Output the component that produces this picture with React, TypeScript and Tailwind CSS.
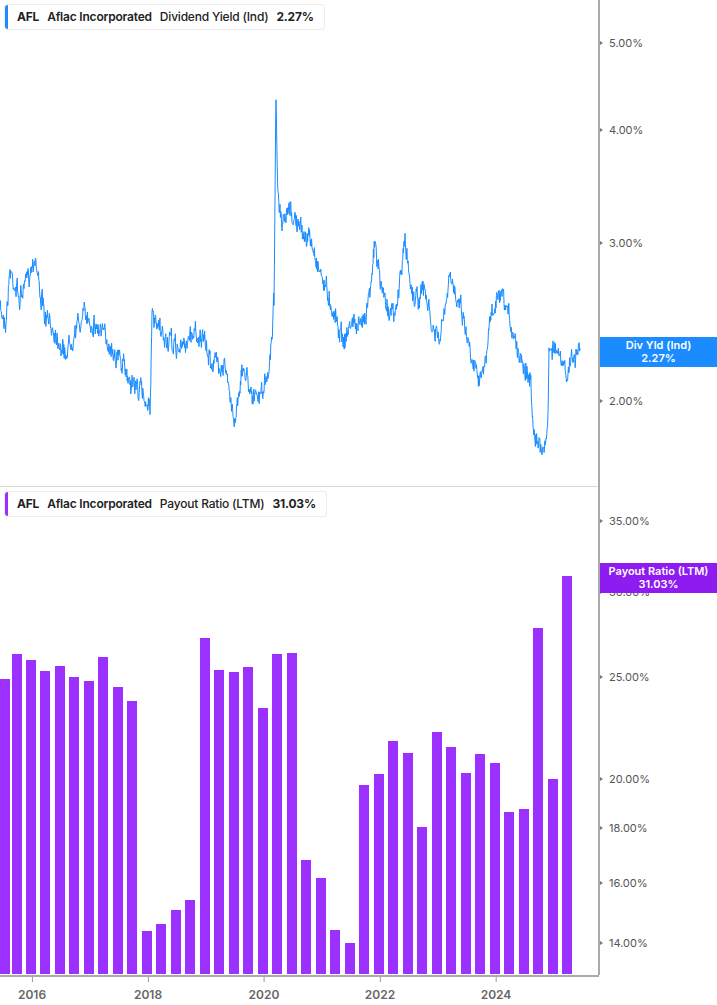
import React from "react";

const bars: [number, number][] = [[0,680],[12,655],[26,661],[40,672],[55,667],[69,678],[84,682],[98,658],[113,688],[127,702],[142,932],[156,925],[171,911],[185,901],[200,639],[214,671],[229,673],[243,668],[258,709],[272,655],[287,654],[301,861],[316,879],[330,931],[345,944],[359,786],[374,775],[388,742],[403,754],[417,828],[432,733],[446,748],[461,774],[475,755],[490,764],[504,813],[519,810],[533,629],[548,780],[562,577]];

const keys: [number, number][] = [[0,310],[6,320],[10,270],[20,300],[30,270],[35,255],[40,290],[45,320],[55,330],[65,355],[75,330],[85,315],[100,330],[110,345],[120,360],[130,380],[140,390],[150,405],[152,320],[158,330],[165,340],[180,350],[195,330],[205,345],[210,360],[225,365],[230,400],[235,420],[240,380],[245,370],[255,400],[260,395],[268,380],[272,330],[274,300],[276,90],[278,200],[282,230],[290,210],[300,230],[310,240],[320,270],[330,300],[340,330],[345,340],[352,320],[360,330],[368,300],[375,245],[380,280],[385,300],[395,320],[400,280],[405,242],[410,280],[415,300],[425,290],[432,330],[440,340],[450,280],[460,300],[470,350],[480,375],[485,370],[490,320],[498,300],[502,300],[510,320],[518,350],[525,365],[530,380],[533,420],[537,440],[541,450],[546,440],[548,420],[549,350],[553,345],[560,360],[566,375],[572,360],[580,348]];

function buildLine() {
  let seed = 7;
  const rnd = () => { seed = (seed * 16807) % 2147483647; return seed / 2147483647; };
  const pts: string[] = [];
  let drift = 0;
  for (let k = 0; k < keys.length - 1; k++) {
    const [x0, y0] = keys[k];
    const [x1, y1] = keys[k + 1];
    const steps = Math.max(1, Math.round((x1 - x0) * 2.5));
    for (let s = 0; s < steps; s++) {
      const t = s / steps;
      const x = x0 + (x1 - x0) * t;
      drift = drift * 0.6 + (rnd() - 0.5) * 14;
      const y = y0 + (y1 - y0) * t + drift + (rnd() - 0.5) * 10;
      pts.push(`${x.toFixed(1)},${y.toFixed(1)}`);
    }
  }
  pts.push(`${keys[keys.length - 1][0]},${keys[keys.length - 1][1]}`);
  return pts.join(" ");
}

const font = { fontFamily: "Inter, 'Liberation Sans', sans-serif" };

function Legend({ color, metric, value }: { color: string; metric: string; value: string }) {
  return (
    <div className="absolute left-[4px] top-[4px] flex h-[26px] items-center gap-[8px] rounded-[3px] border border-[#ececec] bg-white pr-[10px] text-[12px] tracking-[-0.2px] text-[#222]">
      <div className={`mr-[1px] h-full w-[3px] rounded-l-[3px] ${color}`} />
      <span className="font-bold">AFL</span>
      <span className="font-semibold">Aflac Incorporated</span>
      <span className="font-medium">{metric}</span>
      <span className="font-bold">{value}</span>
    </div>
  );
}

function Tick({ y, label }: { y: number; label: string }) {
  return (
    <div className="absolute left-0 flex items-center text-[11px] text-[#555]" style={{ top: y - 8 }}>
      <div className="h-0 w-0 border-y-[2px] border-l-[3px] border-y-transparent border-l-[#777]" />
      <span className="ml-[6px]">{label}</span>
    </div>
  );
}

export default function App() {
  const line = buildLine();
  return (
    <div className="flex h-[1005px] w-[717px] flex-col bg-white" style={font}>
      <div className="flex h-[975px]">
        <div className="flex w-[598px] flex-col">
          <div className="relative h-[487px] border-b border-[#d8d8d8]">
            <svg width="598" height="487" className="absolute inset-0">
              <polyline points={line} fill="none" stroke="#1a8cff" strokeWidth="1" />
            </svg>
            <Legend color="bg-[#1a8cff]" metric="Dividend Yield (Ind)" value="2.27%" />
          </div>
          <div className="relative h-[487px]">
            <svg width="598" height="487" className="absolute inset-0">
              {bars.map(([x, top], i) => (
                <rect key={i} x={x} y={top - 488} width={10} height={975 - top} fill="#9b30ff" />
              ))}
            </svg>
            <Legend color="bg-[#9b30ff]" metric="Payout Ratio (LTM)" value="31.03%" />
          </div>
        </div>
        <div className="relative flex-1 border-l-2 border-[#aaa]">
          <Tick y={43} label="5.00%" />
          <Tick y={130} label="4.00%" />
          <Tick y={243} label="3.00%" />
          <Tick y={401} label="2.00%" />
          <Tick y={521} label="35.00%" />
          <Tick y={592} label="30.00%" />
          <Tick y={677} label="25.00%" />
          <Tick y={779} label="20.00%" />
          <Tick y={828} label="18.00%" />
          <Tick y={883} label="16.00%" />
          <Tick y={943} label="14.00%" />
          <div className="absolute left-0 right-0 top-[337px] flex h-[30px] flex-col items-center justify-center bg-[#1a8cff] text-[11px] font-semibold leading-[13px] text-white">
            <span>Div Yld (Ind)</span><span>2.27%</span>
          </div>
          <div className="absolute left-0 right-0 top-[563px] flex h-[30px] flex-col items-center justify-center bg-[#8e1cf0] text-[11px] font-semibold leading-[13px] text-white">
            <span>Payout Ratio (LTM)</span><span>31.03%</span>
          </div>
        </div>
      </div>
      <div className="relative h-[30px] w-[599px] border-t-2 border-[#aaa]">
        {[["2016", 32], ["2018", 148], ["2020", 264], ["2022", 380], ["2024", 496]].map(([l, x]) => (
          <div key={l as string} className="absolute top-0 flex -translate-x-1/2 flex-col items-center" style={{ left: x as number }}>
            <div className="h-[5px] w-px bg-[#999]" />
            <span className="mt-[4px] text-[12px] font-semibold text-[#666]">{l}</span>
          </div>
        ))}
      </div>
    </div>
  );
}
